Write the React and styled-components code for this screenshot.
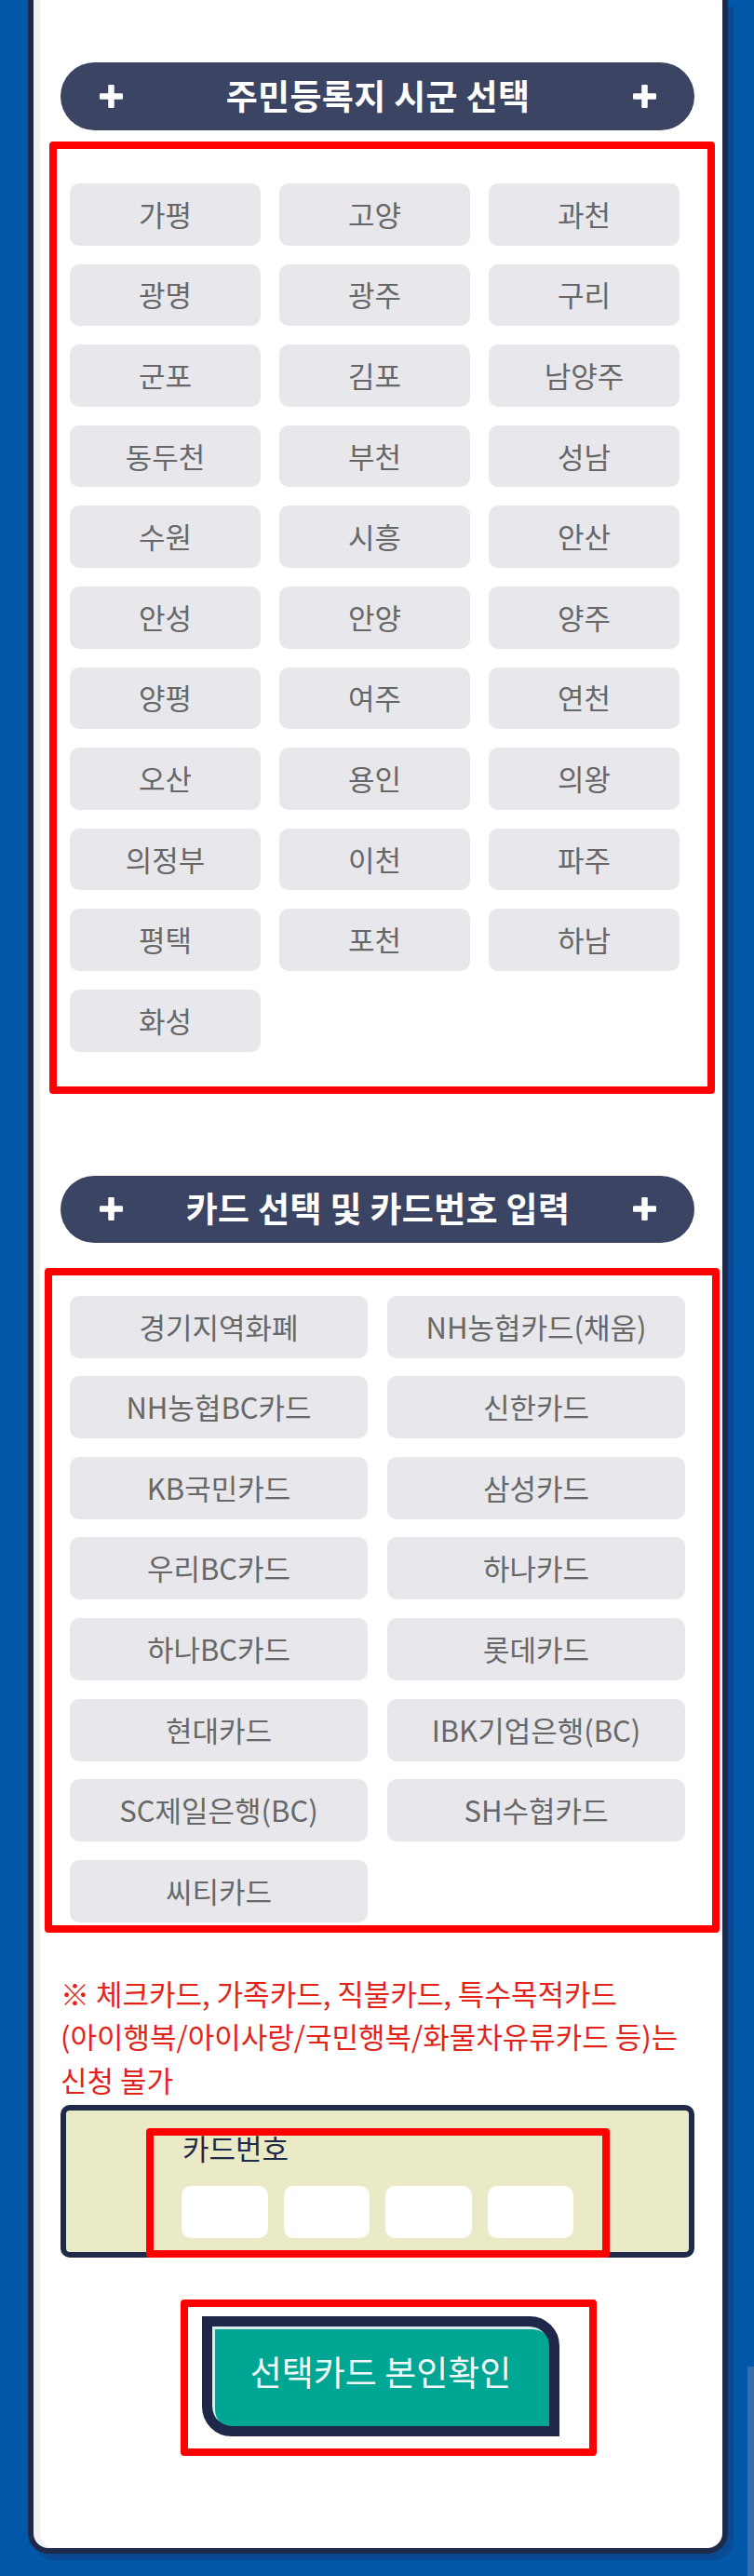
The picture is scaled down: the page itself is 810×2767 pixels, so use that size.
import React from 'react';
import styled, { createGlobalStyle } from 'styled-components';

const GlobalStyle = createGlobalStyle`
  html, body { margin: 0; padding: 0; background: #0257a8; }
  body { font-family: "Noto Sans CJK KR", "Noto Sans", sans-serif; }
  *, *::before, *::after { box-sizing: border-box; }
`;

const Page = styled.div`
  position: relative;
  width: 810px;
  background: #0257a8;
  padding: 0 28px 24px 30px;
`;

const ScrollThumb = styled.div`
  position: absolute;
  right: 0;
  top: 2542px;
  width: 7px;
  height: 225px;
  background: #3a6da6;
`;

const Card = styled.main`
  background: #fff;
  border: 6px solid #1f2a4a;
  border-top: none;
  border-radius: 0 0 22px 22px;
  box-shadow: 6px 7px 0 #0a4a92, inset 7px 0 0 #f1f1f4;
  padding: 67px 30px 99px 29px;
  display: flex;
  flex-direction: column;
`;

const SectionHeader = styled.h2`
  margin: ${p => p.$mt}px 0 0;
  height: ${p => p.$h}px;
  border-radius: 40px;
  background: #3b4463;
  color: #fff;
  display: flex;
  align-items: center;
  justify-content: space-between;
  padding: 0 41px 0 42px;
  font-size: 37px;
  font-weight: 700;
  line-height: 1;
  letter-spacing: 0.3px;
`;

const HeaderTitle = styled.span`
  display: block;
  padding-bottom: 2px;
`;

const Highlight = styled.section`
  border: 8px solid #ff0000;
  border-radius: 4px;
  margin: ${p => p.$margin};
  padding: ${p => p.$padding};
`;

const ChoiceGrid = styled.div`
  display: grid;
  grid-template-columns: repeat(${p => p.$cols}, 1fr);
  column-gap: ${p => p.$colGap}px;
  row-gap: ${p => p.$rowGap}px;
  grid-auto-rows: ${p => p.$rowH}px;
`;

const Choice = styled.button`
  border: none;
  border-radius: 10px;
  background: #e8e8ec;
  color: #676767;
  font-family: inherit;
  font-size: 31px;
  font-weight: 400;
  line-height: 1;
  padding: 0 0 2px;
  display: flex;
  align-items: center;
  justify-content: center;
  white-space: nowrap;
`;

const Notice = styled.p`
  margin: 42px 0 0;
  color: #e2231a;
  font-size: 31px;
  line-height: 46.5px;
`;

const NumberBox = styled.div`
  position: relative;
  margin-top: 4px;
  height: 164px;
  border: 6px solid #1f2a4a;
  border-radius: 10px;
  background: #eaeac6;
  padding-top: 20px;
  display: flex;
  justify-content: center;
`;

const NumberInner = styled.div`
  width: 421px;
  display: flex;
  flex-direction: column;
`;

const NumberLabel = styled.label`
  font-size: 31px;
  line-height: 40px;
  color: #1e2a47;
  padding-left: 1px;
`;

const InputRow = styled.div`
  display: flex;
  gap: 17px;
  margin-top: 21px;
`;

const DigitInput = styled.input`
  flex: 1;
  min-width: 0;
  height: 56px;
  border: none;
  border-radius: 10px;
  background: #fff;
  outline: none;
`;

const OverlayFrame = styled.div`
  position: absolute;
  left: 86px;
  top: 19px;
  width: 498px;
  height: 139px;
  border: 8px solid #ff0000;
  border-radius: 4px;
  pointer-events: none;
`;

const ButtonFrame = styled.div`
  margin: 45px 0 0 129px;
  width: 447px;
  height: 168px;
  border: 8px solid #ff0000;
  border-radius: 4px;
  padding: 10px 0 0 15px;
`;

const ConfirmButton = styled.button`
  width: 384px;
  height: 129px;
  border: 11px solid #1f2848;
  border-radius: 0 32px 0 32px;
  background: #00a694;
  box-shadow: inset 3px 3px 0 #d6f1ec;
  color: #f2faf9;
  font-family: inherit;
  font-size: 37px;
  line-height: 1;
  padding: 0 0 10px;
  display: flex;
  align-items: center;
  justify-content: center;
`;

const PlusIcon = () => (
  <svg width="25" height="25" viewBox="0 0 25 25" aria-hidden="true">
    <rect x="9.25" y="0" width="6.5" height="25" rx="1.2" fill="#fff" />
    <rect x="0" y="9.25" width="25" height="6.5" rx="1.2" fill="#fff" />
  </svg>
);

const regions = [
  '가평', '고양', '과천', '광명', '광주', '구리', '군포', '김포', '남양주',
  '동두천', '부천', '성남', '수원', '시흥', '안산', '안성', '안양', '양주',
  '양평', '여주', '연천', '오산', '용인', '의왕', '의정부', '이천', '파주',
  '평택', '포천', '하남', '화성',
];

const cards = [
  '경기지역화폐', 'NH농협카드(채움)', 'NH농협BC카드', '신한카드',
  'KB국민카드', '삼성카드', '우리BC카드', '하나카드',
  '하나BC카드', '롯데카드', '현대카드', 'IBK기업은행(BC)',
  'SC제일은행(BC)', 'SH수협카드', '씨티카드',
];

export default function App() {
  return (
    <>
      <GlobalStyle />
      <Page>
        <Card>
          <SectionHeader $mt={0} $h={73}>
            <PlusIcon />
            <HeaderTitle>주민등록지 시군 선택</HeaderTitle>
            <PlusIcon />
          </SectionHeader>
          <Highlight $margin="12px -22px 0 -12px" $padding="37px 30px 37px 14px">
            <ChoiceGrid $cols={3} $colGap={20} $rowGap={20} $rowH={66.6}>
              {regions.map(r => (
                <Choice key={r} type="button">{r}</Choice>
              ))}
            </ChoiceGrid>
          </Highlight>

          <SectionHeader $mt={88} $h={72}>
            <PlusIcon />
            <HeaderTitle>카드 선택 및 카드번호 입력</HeaderTitle>
            <PlusIcon />
          </SectionHeader>
          <Highlight $margin="27px -27px 0 -17px" $padding="22px 29px 3px 19px">
            <ChoiceGrid $cols={2} $colGap={21} $rowGap={19.6} $rowH={67}>
              {cards.map(c => (
                <Choice key={c} type="button">{c}</Choice>
              ))}
            </ChoiceGrid>
          </Highlight>

          <Notice>
            ※ 체크카드, 가족카드, 직불카드, 특수목적카드<br />
            (아이행복/아이사랑/국민행복/화물차유류카드 등)는<br />
            신청 불가
          </Notice>

          <NumberBox>
            <NumberInner>
              <NumberLabel>카드번호</NumberLabel>
              <InputRow>
                <DigitInput type="tel" maxLength={4} />
                <DigitInput type="tel" maxLength={4} />
                <DigitInput type="password" maxLength={4} />
                <DigitInput type="tel" maxLength={4} />
              </InputRow>
            </NumberInner>
            <OverlayFrame />
          </NumberBox>

          <ButtonFrame>
            <ConfirmButton type="button">선택카드 본인확인</ConfirmButton>
          </ButtonFrame>
        </Card>
        <ScrollThumb />
      </Page>
    </>
  );
}
